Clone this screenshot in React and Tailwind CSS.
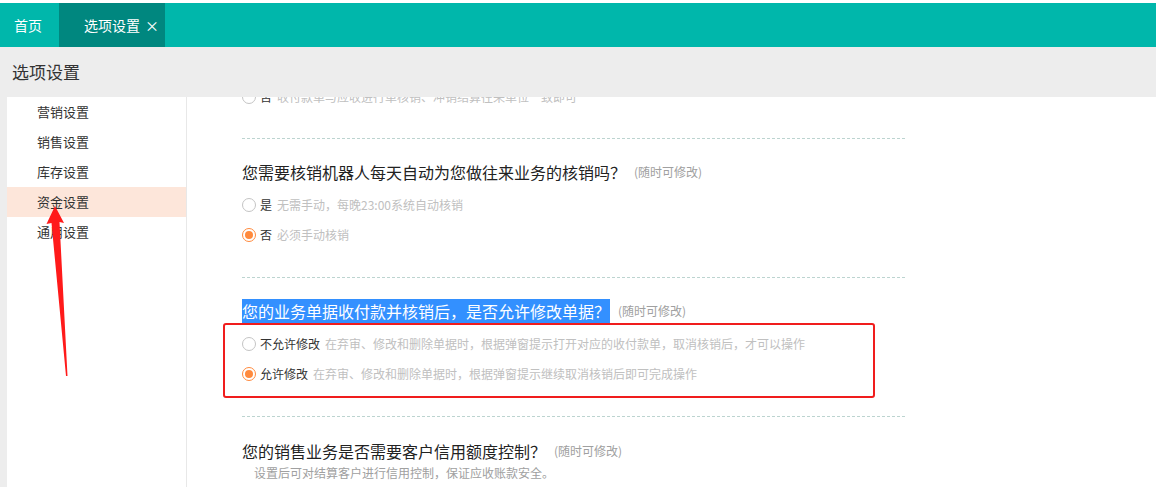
import React from 'react';

const font = { fontFamily: '"Noto Sans CJK SC", "Noto Sans", sans-serif' };

function Radio({ checked }) {
  return checked ? (
    <span className="w-[14px] h-[14px] rounded-full border border-[#ff8a3d] flex items-center justify-center shrink-0 bg-white">
      <span className="w-[8px] h-[8px] rounded-full bg-[#ff8a3d]" />
    </span>
  ) : (
    <span className="w-[14px] h-[14px] rounded-full border border-[#c4c4c4] shrink-0 bg-white" />
  );
}

function Option({ checked, label, desc, className = '' }) {
  return (
    <div className={`h-[30px] flex items-center ${className}`}>
      <Radio checked={checked} />
      <span className="ml-[4px] text-[12px] text-[#333]">{label}</span>
      <span className="ml-[5px] text-[12px] text-[#c0c0c0]">{desc}</span>
    </div>
  );
}

function Dashed({ className = '' }) {
  return <div className={`w-[663px] border-t border-dashed border-[#bcd4d0] ${className}`} />;
}

function Hint() {
  return <span className="ml-[8px] text-[12px] text-[#a0a0a0]">(随时可修改)</span>;
}

const menu = ['营销设置', '销售设置', '库存设置', '资金设置', '通用设置'];

export default function App() {
  return (
    <div className="relative w-[1156px] h-[487px] overflow-hidden bg-white flex flex-col" style={font}>
      <div className="h-[3px] bg-white" />
      <div className="h-[44px] bg-[#00b7ab] flex text-white text-[14px]">
        <div className="w-[59px] flex items-center pl-[14px]">首页</div>
        <div className="w-[106px] bg-[#00877f] flex items-center pl-[25px]">
          选项设置<span className="ml-[5px] text-[14px]">×</span>
        </div>
      </div>
      <div className="h-[50px] bg-[#ededed] flex items-center pl-[12px] text-[17px] text-[#333]">选项设置</div>
      <div className="flex-1 flex min-h-0">
        <div className="w-[7px] bg-[#ededed]" />
        <div className="w-[180px] border-r border-[#e8e8e8] flex flex-col">
          {menu.map((m, i) => (
            <div
              key={m}
              className={`h-[30px] flex items-center pl-[30px] text-[13px] text-[#333] ${i === 3 ? 'bg-[#fde6da]' : ''}`}
            >
              {m}
            </div>
          ))}
        </div>
        <div className="relative flex-1 overflow-hidden pl-[55px] flex flex-col">
          <Option className="-mt-[15px]" label="否" desc="收付款单与应收进行单核销、冲销结算往来单位一致即可" />
          <Dashed className="mt-[26px]" />

          <div className="mt-[21px] h-[24px] flex items-center">
            <span className="text-[16px] text-[#222]">您需要核销机器人每天自动为您做往来业务的核销吗？</span>
            <Hint />
          </div>
          <Option className="mt-[6px]" label="是" desc="无需手动，每晚23:00系统自动核销" />
          <Option checked label="否" desc="必须手动核销" />
          <Dashed className="mt-[27px]" />

          <div className="mt-[21px] h-[24px] flex items-center">
            <span className="h-[24px] flex items-center bg-[#3390ff] text-white text-[16px]">
              您的业务单据收付款并核销后，是否允许修改单据？
            </span>
            <Hint />
          </div>
          <Option className="mt-[6px]" label="不允许修改" desc="在弃审、修改和删除单据时，根据弹窗提示打开对应的收付款单，取消核销后，才可以操作" />
          <Option checked label="允许修改" desc="在弃审、修改和删除单据时，根据弹窗提示继续取消核销后即可完成操作" />
          <Dashed className="mt-[27px]" />

          <div className="mt-[22px] h-[24px] flex items-center">
            <span className="text-[16px] text-[#222]">您的销售业务是否需要客户信用额度控制？</span>
            <Hint />
          </div>
          <div className="h-[20px] flex items-center pl-[12px] text-[12px] text-[#a0a0a0]">
            设置后可对结算客户进行信用控制，保证应收账款安全。
          </div>

          <div className="absolute left-[36px] top-[226px] w-[652px] h-[75px] border-2 border-[#f01d1d] rounded-[3px]" />
        </div>
      </div>

      <svg className="absolute left-0 top-0 pointer-events-none" width="1156" height="487">
        <polygon points="55,206 64,223 59.5,222 67.5,376 66,376 51.5,223 46.5,224" fill="#ff1a1a" />
      </svg>
    </div>
  );
}
